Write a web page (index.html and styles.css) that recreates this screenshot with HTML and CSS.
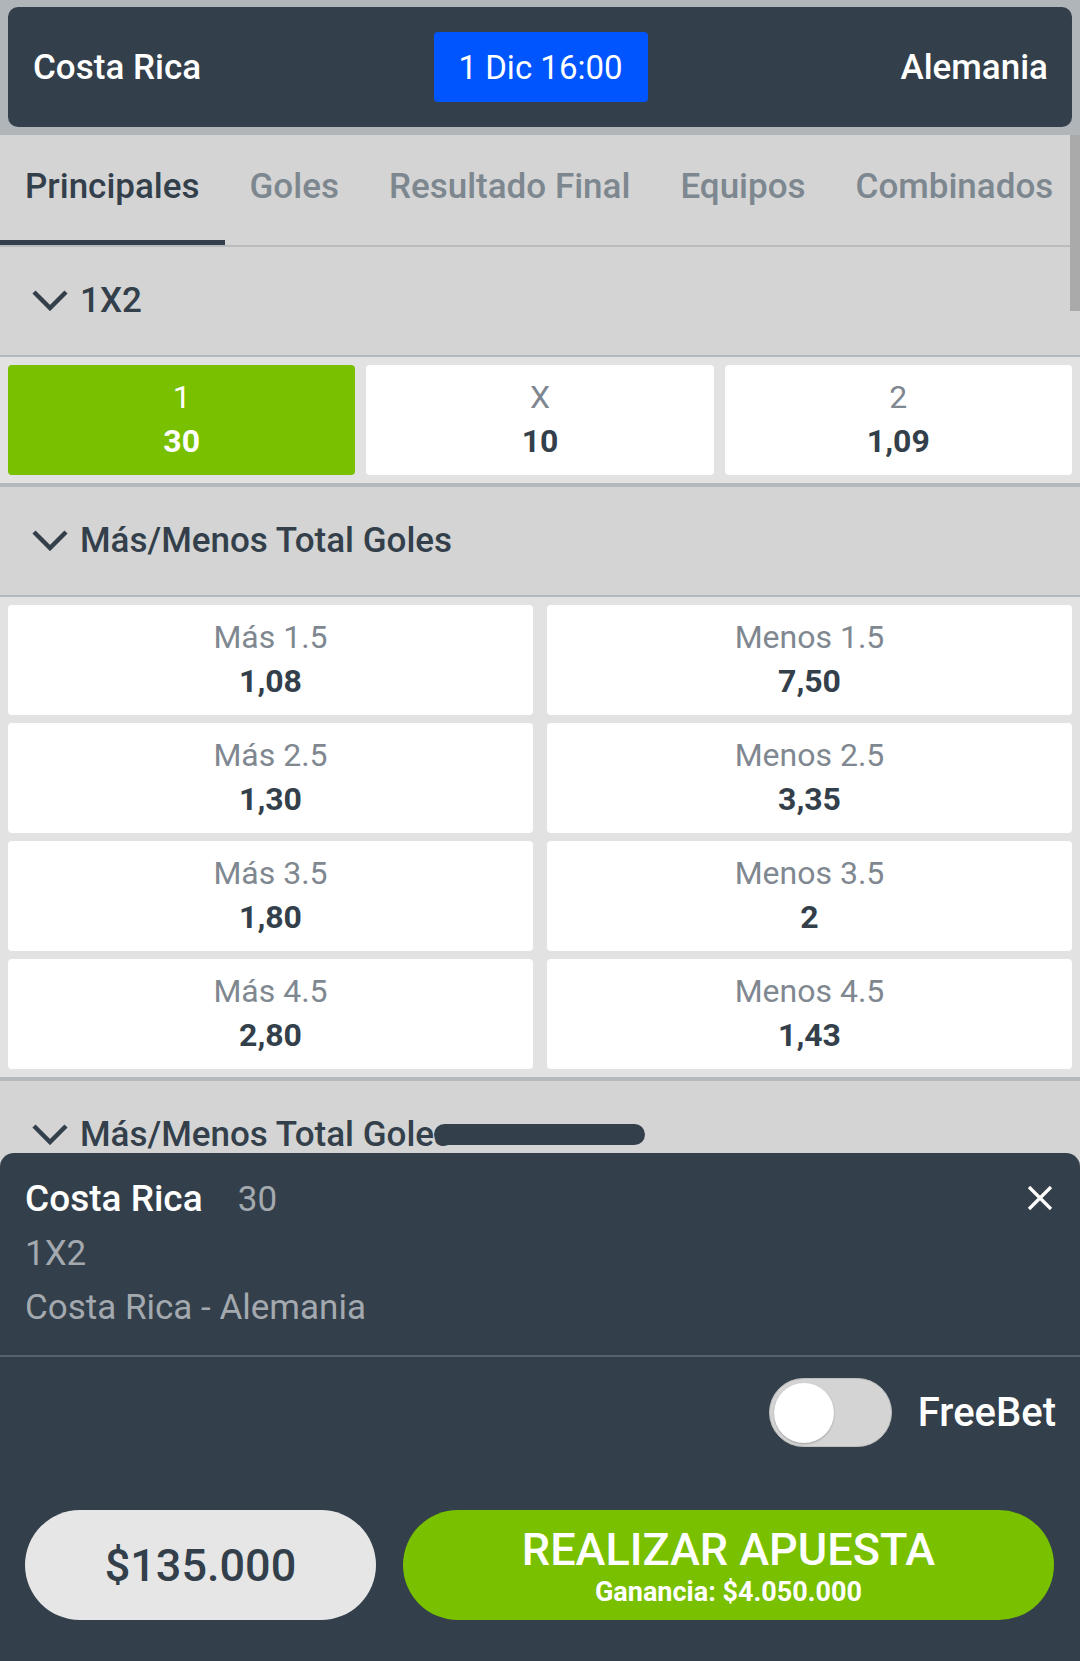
FILE: index.html
```html
<!DOCTYPE html>
<html lang="es">
<head>
<meta charset="utf-8">
<title>Costa Rica - Alemania</title>
<link rel="stylesheet" href="styles.css">
</head>
<body>
<div class="page">
  <div class="top">
    <div class="match">
      <div class="team">Costa Rica</div>
      <div class="date">1 Dic 16:00</div>
      <div class="team team-right">Alemania</div>
    </div>
  </div>

  <nav class="tabs">
    <div class="tab active">Principales</div>
    <div class="tab">Goles</div>
    <div class="tab">Resultado Final</div>
    <div class="tab">Equipos</div>
    <div class="tab">Combinados</div>
  </nav>

  <section class="market">
    <div class="market-head">
      <svg class="chev" viewBox="0 0 38 22"><path d="M3 3 L19 19 L35 3" fill="none" stroke="#333f4a" stroke-width="4.5"/></svg>
      <span>1X2</span>
    </div>
    <div class="market-body grid3">
      <div class="odd selected"><div class="lbl">1</div><div class="val">30</div></div>
      <div class="odd"><div class="lbl">X</div><div class="val">10</div></div>
      <div class="odd"><div class="lbl">2</div><div class="val">1,09</div></div>
    </div>
  </section>

  <section class="market">
    <div class="market-head">
      <svg class="chev" viewBox="0 0 38 22"><path d="M3 3 L19 19 L35 3" fill="none" stroke="#333f4a" stroke-width="4.5"/></svg>
      <span>Más/Menos Total Goles</span>
    </div>
    <div class="market-body grid2">
      <div class="odd"><div class="lbl">Más 1.5</div><div class="val">1,08</div></div>
      <div class="odd"><div class="lbl">Menos 1.5</div><div class="val">7,50</div></div>
      <div class="odd"><div class="lbl">Más 2.5</div><div class="val">1,30</div></div>
      <div class="odd"><div class="lbl">Menos 2.5</div><div class="val">3,35</div></div>
      <div class="odd"><div class="lbl">Más 3.5</div><div class="val">1,80</div></div>
      <div class="odd"><div class="lbl">Menos 3.5</div><div class="val">2</div></div>
      <div class="odd"><div class="lbl">Más 4.5</div><div class="val">2,80</div></div>
      <div class="odd"><div class="lbl">Menos 4.5</div><div class="val">1,43</div></div>
    </div>
  </section>

  <section class="market">
    <div class="market-head">
      <svg class="chev" viewBox="0 0 38 22"><path d="M3 3 L19 19 L35 3" fill="none" stroke="#333f4a" stroke-width="4.5"/></svg>
      <span>Más/Menos Total Goles</span>
    </div>
  </section>

  <div class="scrollbar"></div>
  <div class="handle"></div>

  <div class="sheet">
    <div class="sel">
      <div class="sel-title">Costa Rica <span class="sel-odd">30</span></div>
      <div class="sel-sub">1X2</div>
      <div class="sel-sub">Costa Rica - Alemania</div>
      <svg class="close" viewBox="0 0 26 26"><path d="M2 2 L24 24 M24 2 L2 24" stroke="#ffffff" stroke-width="3.2" fill="none"/></svg>
    </div>
    <div class="freebet">
      <div class="toggle"><div class="knob"></div></div>
      <span class="fb-label">FreeBet</span>
    </div>
    <div class="actions">
      <div class="amount">$135.000</div>
      <div class="place">
        <div class="place-main">REALIZAR APUESTA</div>
        <div class="place-sub">Ganancia: $4.050.000</div>
      </div>
    </div>
  </div>
</div>
</body>
</html>
```

FILE: styles.css
```css
* { box-sizing: border-box; }
html, body { margin: 0; padding: 0; }
body {
  width: 1080px;
  height: 1661px;
  overflow: hidden;
  background: #d4d4d4;
  font-family: Roboto, "Noto Sans", sans-serif;
  color: #333f4a;
}
.page { position: relative; width: 1080px; height: 1661px; overflow: hidden; }

.top {
  background: #b0b5b9;
  padding: 7px 8px 8px 8px;
}
.match {
  height: 120px;
  background: #333f4a;
  border-radius: 10px;
  display: grid;
  grid-template-columns: 1fr auto 1fr;
  align-items: center;
  padding: 0 24px 0 25px;
}
.team {
  color: #fff;
  font-size: 35px;
  font-weight: 500;
}
.team-right { justify-self: end; }
.date {
  background: #0055ff;
  color: #fff;
  font-size: 33px;
  width: 214px;
  height: 70px;
  border-radius: 4px;
  display: flex;
  align-items: center;
  justify-content: center;
}

.tabs {
  display: flex;
  height: 112px;
  border-bottom: 2px solid #b8bcbf;
  background: #d4d4d4;
}
.tab {
  padding: 0 25px 2px 25px;
  display: flex;
  align-items: center;
  font-size: 35px;
  font-weight: 500;
  color: #7d878f;
  white-space: nowrap;
  border-bottom: 5px solid transparent;
}
.tab.active {
  color: #333f4a;
  border-bottom-color: #333f4a;
}

.market-head {
  height: 110px;
  display: flex;
  align-items: center;
  gap: 11px;
  padding: 0 0 2px 31px;
  font-size: 35px;
  font-weight: 500;
  color: #333f4a;
  border-bottom: 2px solid #b4b9bd;
}
.chev { width: 38px; height: 22px; flex: none; }
.market-body {
  background: #e2e2e2;
  padding: 8px;
  border-bottom: 4px solid #b4b9bd;
}
.grid3 { display: grid; grid-template-columns: repeat(3, 1fr); gap: 11px; }
.grid2 { display: grid; grid-template-columns: repeat(2, 1fr); column-gap: 14px; row-gap: 8px; }
.odd {
  background: #fff;
  border-radius: 4px;
  height: 110px;
  padding-top: 10px;
  text-align: center;
}
.lbl { font-size: 32px; line-height: 44px; color: #7f8890; }
.val { font-size: 32px; line-height: 44px; font-weight: 700; color: #333f4a; }
.odd.selected { background: #79c000; }
.odd.selected .lbl, .odd.selected .val { color: #fff; }

.scrollbar {
  position: absolute;
  left: 1070px;
  top: 135px;
  width: 10px;
  height: 176px;
  background: #aaaaaa;
}
.handle {
  position: absolute;
  left: 434px;
  top: 1124px;
  width: 211px;
  height: 21px;
  border-radius: 11px;
  background: #333f4a;
}

.sheet {
  position: absolute;
  left: 0;
  top: 1153px;
  width: 1080px;
  height: 508px;
  background: #333f4a;
  border-radius: 14px 14px 0 0;
}
.sel {
  position: relative;
  padding: 19px 25px 20px 25px;
  border-bottom: 2px solid #56616b;
}
.sel-title { font-size: 37px; line-height: 54px; font-weight: 500; color: #fff; }
.sel-odd { font-size: 35px; font-weight: 400; color: #a3a9ae; margin-left: 26px; }
.sel-sub { font-size: 35px; line-height: 54px; color: #a3a9ae; }
.close {
  position: absolute;
  right: 27px;
  top: 32px;
  width: 26px;
  height: 26px;
}
.freebet {
  display: flex;
  justify-content: flex-end;
  align-items: center;
  gap: 26px;
  padding: 21px 24px 0 0;
}
.toggle {
  width: 123px;
  height: 69px;
  border-radius: 35px;
  background: #d4d4d4;
  border: 1px solid #bfbfbf;
  padding: 4px;
}
.knob {
  width: 60px;
  height: 60px;
  border-radius: 50%;
  background: #fff;
  box-shadow: 0 1px 2px rgba(0,0,0,0.25);
}
.fb-label { font-size: 40px; font-weight: 500; color: #fff; }

.actions {
  display: flex;
  gap: 27px;
  padding: 63px 26px 0 25px;
}
.amount {
  width: 351px;
  height: 110px;
  border-radius: 55px;
  background: #e6e6e6;
  display: flex;
  align-items: center;
  justify-content: center;
  font-size: 45px;
  font-weight: 500;
  color: #333f4a;
}
.place {
  flex: 1;
  height: 110px;
  border-radius: 55px;
  background: #79c000;
  color: #fff;
  display: flex;
  flex-direction: column;
  align-items: center;
  justify-content: center;
  padding-top: 4px;
}
.place-main { font-size: 45px; line-height: 46px; font-weight: 500; }
.place-sub { font-size: 27px; line-height: 30px; font-weight: 700; margin-top: 4px; }
```
